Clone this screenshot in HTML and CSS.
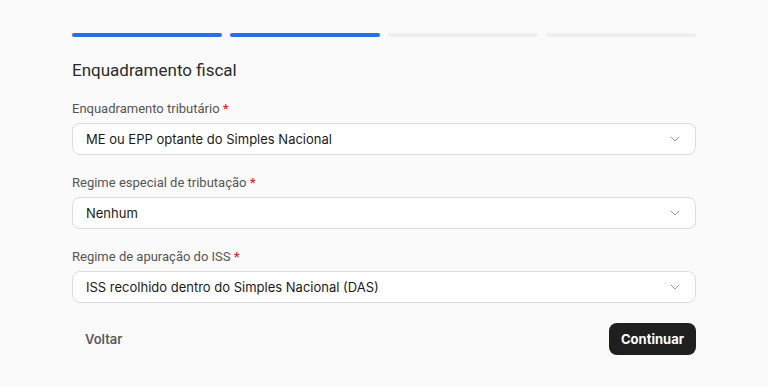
FILE: index.html
```html
<!DOCTYPE html>
<html lang="pt-BR">
<head>
<meta charset="utf-8">
<link rel="stylesheet" href="styles.css">
</head>
<body>
<div class="wizard">
  <div class="progress">
    <span class="step done"></span>
    <span class="step done"></span>
    <span class="step"></span>
    <span class="step"></span>
  </div>
  <h2 class="title">Enquadramento fiscal</h2>
  <div class="field">
    <label class="label">Enquadramento tributário <span class="req">*</span></label>
    <div class="select"><span>ME ou EPP optante do Simples Nacional</span><svg class="chev" width="10" height="6" viewBox="0 0 10 6"><path d="M1 1l4 4 4-4" fill="none" stroke="#9a9a9a" stroke-width="1" stroke-linecap="round" stroke-linejoin="round"/></svg></div>
  </div>
  <div class="field">
    <label class="label">Regime especial de tributação <span class="req">*</span></label>
    <div class="select"><span>Nenhum</span><svg class="chev" width="10" height="6" viewBox="0 0 10 6"><path d="M1 1l4 4 4-4" fill="none" stroke="#9a9a9a" stroke-width="1" stroke-linecap="round" stroke-linejoin="round"/></svg></div>
  </div>
  <div class="field">
    <label class="label">Regime de apuração do ISS <span class="req">*</span></label>
    <div class="select"><span>ISS recolhido dentro do Simples Nacional (DAS)</span><svg class="chev" width="10" height="6" viewBox="0 0 10 6"><path d="M1 1l4 4 4-4" fill="none" stroke="#9a9a9a" stroke-width="1" stroke-linecap="round" stroke-linejoin="round"/></svg></div>
  </div>
  <div class="actions">
    <button class="btn-back">Voltar</button>
    <button class="btn-next">Continuar</button>
  </div>
</div>
</body>
</html>
```
FILE: styles.css
```css
html, body {
  margin: 0;
  padding: 0;
  background: #fafafa;
}
body {
  font-family: Inter, "Noto Sans", sans-serif;
}
.wizard {
  width: 624px;
  margin: 0 auto;
  padding-top: 33px;
}
.progress {
  display: flex;
  gap: 8px;
}
.step {
  flex: 1;
  height: 4px;
  border-radius: 2px;
  background: #efefef;
}
.step.done {
  background: #2b6de8;
}
.title {
  margin: 21px 0 0;
  font-family: Roboto, sans-serif;
  font-weight: 400;
  font-size: 17px;
  line-height: 24px;
  color: #2a2a2a;
}
.field {
  margin-top: 19px;
}
.field + .field {
  margin-top: 20px;
}
.label {
  display: block;
  font-family: Roboto, sans-serif;
  font-size: 13px;
  line-height: 16px;
  color: #555;
  margin-bottom: 6px;
}
.req {
  color: #d32f2f;
  font-weight: 700;
}
.select {
  height: 30px;
  border: 1px solid #dcdcdc;
  border-radius: 8px;
  background: #fff;
  display: flex;
  align-items: center;
  justify-content: space-between;
  padding: 0 15px 0 13px;
  font-size: 13px;
  color: #1a1a1a;
}
.chev {
  display: block;
}
.actions {
  margin-top: 20px;
  display: flex;
  justify-content: space-between;
  align-items: center;
}
.btn-back {
  border: 0;
  background: transparent;
  font-family: Inter, sans-serif;
  font-size: 13px;
  font-weight: 600;
  color: #5a5a5a;
  padding: 0 13px;
  height: 32px;
}
.btn-next {
  border: 0;
  background: #1f1f1f;
  color: #fff;
  font-family: Inter, sans-serif;
  font-size: 13px;
  font-weight: 700;
  height: 32px;
  padding: 0 12px;
  border-radius: 8px;
}
```
